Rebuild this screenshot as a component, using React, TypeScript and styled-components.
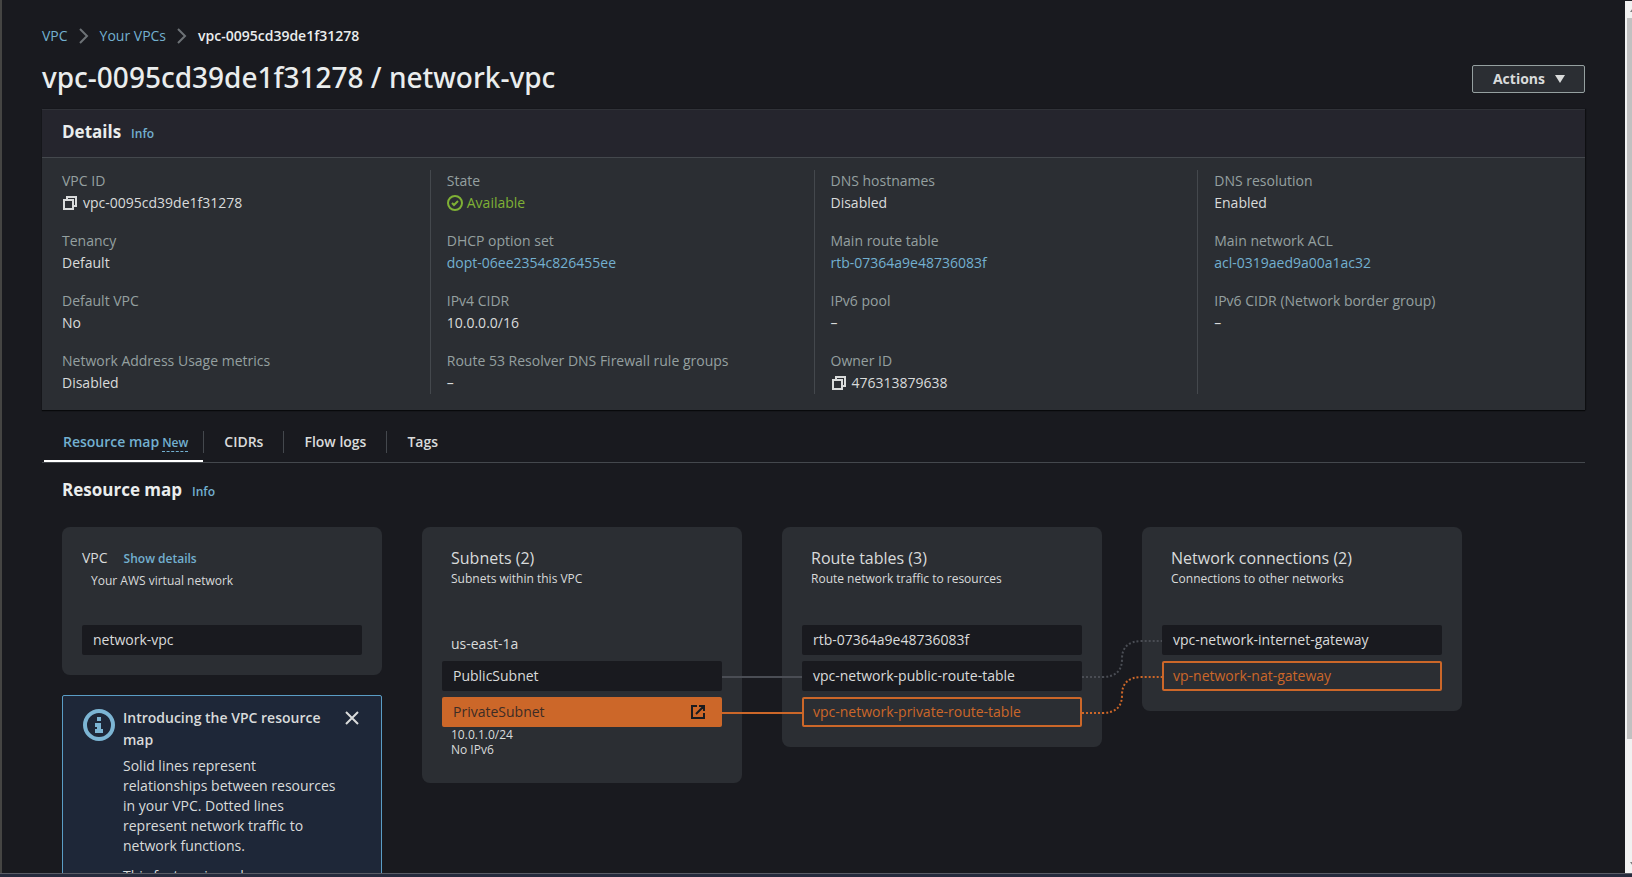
import React from "react";
import styled, { createGlobalStyle, css } from "styled-components";

const c = {
  page: "#191a1f",
  panel: "#2b2e33",
  panelHead: "#25252d",
  line: "#44484d",
  text: "#d9dbdb",
  bright: "#eaeded",
  label: "#95a0a0",
  link: "#73b0d0",
  green: "#7fb135",
  orange: "#cc6729",
};

const GlobalStyle = createGlobalStyle`
  * { box-sizing: border-box; }
  body {
    margin: 0;
    background: ${c.page};
    color: ${c.text};
    font: 14px/22px "Open Sans", "Noto Sans", sans-serif;
  }
  h1, h2, h3, p, ol, ul, dl, dd { margin: 0; padding: 0; font-size: inherit; font-weight: inherit; }
  ol, ul { list-style: none; }
  button { font: inherit; color: inherit; cursor: pointer; }
  svg { display: block; flex: none; }
`;

const Window = styled.div`
  height: 100vh;
  display: grid;
  grid-template: minmax(0, 1fr) auto / minmax(0, 1fr) auto;
`;

const Main = styled.main`
  overflow: hidden;
  border-left: 2px solid #454543;
  padding: 25px 40px 0;
`;

const Track = styled.div`
  width: 7px;
  margin-top: 1px;
  background: #f1f1f1;
  overflow: hidden;
  display: flex;
  flex-direction: column;
`;

const TrackRun = styled.div`
  flex: 1;
`;

const Thumb = styled.div`
  height: 86%;
  margin-left: 2px;
  background: #c1c1c1;
`;

const FooterEdge = styled.footer`
  grid-column: 1 / -1;
  height: 4px;
  border-top: 1px solid #5a5d66;
  background: #262b3d;
`;

const Link = styled.a<{ $small?: boolean }>`
  color: ${c.link};
  text-decoration: none;
  ${(p) => p.$small && css`font-size: 12px; line-height: 16px; font-weight: 600;`}
`;

const Crumbs = styled.ol`
  display: flex;
  align-items: center;
  gap: 11px;
  li { display: flex; align-items: center; gap: 11px; }
`;

const CurrentCrumb = styled.span`
  color: ${c.bright};
  font-weight: 600;
`;

const TitleRow = styled.div`
  display: flex;
  align-items: center;
  justify-content: space-between;
  padding: 14px 0 12px;
`;

const Title = styled.h1`
  padding-bottom: 4px;
  color: ${c.bright};
  font-family: "Noto Sans", "Open Sans", sans-serif;
  font-size: 28px;
  line-height: 32px;
  font-weight: 500;
`;

const ActionsButton = styled.button`
  display: flex;
  align-items: center;
  gap: 9px;
  height: 28px;
  padding: 0 18px 0 20px;
  border: 1px solid #95a0a0;
  border-radius: 2px;
  background: ${c.panel};
  font-weight: 700;
`;

const Panel = styled.section`
  background: ${c.panel};
  border-top: 1px solid #303238;
  box-shadow: 0 1px 1px #08090b, 1px 0 1px #101114;
`;

const PanelHead = styled.header`
  display: flex;
  align-items: baseline;
  gap: 10px;
  padding: 11px 20px 14px;
  border-bottom: 1px solid ${c.line};
  background: ${c.panelHead};
`;

const Heading = styled.h2`
  color: ${c.bright};
  font-size: 17px;
  line-height: 22px;
  font-weight: 700;
`;

const DetailGrid = styled.div`
  display: grid;
  grid-template-columns: repeat(4, minmax(0, 1fr));
  padding: 12px 4px 16px;
`;

const DetailColumn = styled.dl`
  display: flex;
  flex-direction: column;
  gap: 16px;
  padding: 0 16px;
  & + & { border-left: 1px solid ${c.line}; }
`;

const Label = styled.dt`
  color: ${c.label};
`;

const Value = styled.dd`
  display: flex;
  align-items: center;
  gap: 5px;
  font-weight: 500;
`;

const Status = styled.span`
  display: flex;
  align-items: center;
  gap: 4px;
  color: ${c.green};
`;

const IconButton = styled.button`
  padding: 0;
  border: 0;
  background: none;
`;

const TabList = styled.div`
  display: flex;
  padding: 16px 0 0 2px;
  border-bottom: 1px solid ${c.line};
`;

const Tab = styled.button<{ $active?: boolean }>`
  display: flex;
  align-items: baseline;
  gap: 3px;
  height: 36px;
  padding: 5px 20px 9px;
  border: 0;
  border-bottom: 2px solid ${(p) => (p.$active ? "#ffffff" : "transparent")};
  background: none;
  color: ${(p) => (p.$active ? c.link : c.text)};
  font-weight: 600;
  ${(p) => p.$active && css`padding-left: 19px; padding-right: 15px;`}
`;

const TabDivider = styled.span`
  width: 1px;
  height: 22px;
  margin-top: 5px;
  background: ${c.line};
`;

const NewBadge = styled.span`
  border-bottom: 1px dashed ${c.link};
  font-size: 12px;
  line-height: 16px;
`;

const MapSection = styled.section`
  padding: 16px 20px 0;
`;

const MapHead = styled.header`
  display: flex;
  align-items: baseline;
  gap: 10px;
  margin-bottom: 26px;
`;

const Columns = styled.div`
  display: flex;
  align-items: flex-start;
  gap: 40px;
`;

const Side = styled.div`
  display: flex;
  flex-direction: column;
  gap: 20px;
  width: 320px;
`;

const Card = styled.article`
  width: 320px;
  padding: 20px;
  border-radius: 8px;
  background: ${c.panel};
  font-weight: 500;
`;

const CardHead = styled.header<{ $inset?: boolean }>`
  height: 78px;
  padding-left: ${(p) => (p.$inset ? "9px" : "0")};
`;

const CardTitle = styled.h3<{ $large?: boolean }>`
  display: flex;
  align-items: baseline;
  gap: 16px;
  font-size: ${(p) => (p.$large ? "16px" : "14px")};
  line-height: 22px;
`;

const CardNote = styled.p<{ $inset?: boolean }>`
  padding: ${(p) => (p.$inset ? "2px 0 0 9px" : "0")};
  font-size: 12px;
  line-height: 20px;
`;

const Zone = styled.h4`
  margin: 0;
  height: 36px;
  padding: 8px 9px;
  font-weight: inherit;
`;

const Nodes = styled.ul`
  display: flex;
  flex-direction: column;
  gap: 6px;
`;

type Tone = "plain" | "outlined" | "selected";

const tones = {
  plain: css`background: ${c.page}; border-color: ${c.page};`,
  outlined: css`background: ${c.panel}; border-color: ${c.orange}; color: ${c.orange};`,
  selected: css`background: ${c.orange}; border-color: ${c.orange}; color: #3d2c25;`,
};

const Node = styled.li<{ $tone: Tone }>`
  position: relative;
  display: flex;
  align-items: center;
  justify-content: space-between;
  height: 30px;
  padding: 0 15px 0 9px;
  border: 2px solid;
  border-radius: 2px;
  ${(p) => tones[p.$tone]}
`;

const Wire = styled.svg`
  position: absolute;
  left: calc(100% + 2px);
  bottom: 8px;
  fill: none;
  stroke-width: 2;
`;

const SubnetInfo = styled.div`
  padding: 0 9px 6px;
  font-size: 12px;
  line-height: 15px;
`;

const Alert = styled.aside`
  display: flex;
  align-items: flex-start;
  padding: 11px 20px 20px;
  border: 1px solid #5a9dc5;
  border-radius: 2px;
  background: #1e2738;
  svg { margin-top: 2px; }
`;

const AlertText = styled.div`
  flex: 1;
  padding-left: 8px;
  p { line-height: 20px; margin-top: 5px; }
  p + p { margin-top: 10px; }
`;

const AlertTitle = styled.h3`
  font-weight: 600;
`;

const CopyIcon = () => (
  <svg width="16" height="16" viewBox="0 0 16 16" fill="none" stroke="#d9dbdb" strokeWidth="2">
    <path d="M2 5h9v9H2zM5 5V2h9v9h-3" />
  </svg>
);

const Chevron = () => (
  <svg width="10" height="16" viewBox="0 0 10 16" fill="none" stroke="#6d7276" strokeWidth="2">
    <path d="M1 1l7 7-7 7" />
  </svg>
);

const CheckIcon = () => (
  <svg width="16" height="16" viewBox="0 0 16 16" fill="none" stroke={c.green} strokeWidth="2">
    <circle cx="8" cy="8" r="7" />
    <path d="M5 8l2 2 4-4" />
  </svg>
);

const InfoIcon = () => (
  <svg width="32" height="32" viewBox="0 0 32 32" fill="none">
    <circle cx="16" cy="16" r="14" stroke="#7cb5d4" strokeWidth="4" />
    <path d="M14 8h4v4h-4zM12 14h6v6h2v4h-8v-4h2v-2h-2z" fill="#7cb5d4" />
  </svg>
);

const OpenIcon = () => (
  <svg width="14" height="14" viewBox="0 0 14 14" fill="none" stroke="#1a1b1f" strokeWidth="2">
    <path d="M6 1H1v12h12V8M8 1h5v5M13 1L5 9" />
  </svg>
);

const CloseIcon = () => (
  <svg width="18" height="18" viewBox="0 0 18 18" fill="none" stroke={c.text} strokeWidth="2">
    <path d="M3 3l12 12M15 3L3 15" />
  </svg>
);

const ScrollArrow = ({ d }: { d: string }) => (
  <svg width="17" height="17" viewBox="0 0 17 17" fill="#7a7a7a"><path d={d} /></svg>
);

type Detail = { label: string; value: string; kind?: "link" | "copy" | "status" };

const details: Detail[][] = [
  [
    { label: "VPC ID", value: "vpc-0095cd39de1f31278", kind: "copy" },
    { label: "Tenancy", value: "Default" },
    { label: "Default VPC", value: "No" },
    { label: "Network Address Usage metrics", value: "Disabled" },
  ],
  [
    { label: "State", value: "Available", kind: "status" },
    { label: "DHCP option set", value: "dopt-06ee2354c826455ee", kind: "link" },
    { label: "IPv4 CIDR", value: "10.0.0.0/16" },
    { label: "Route 53 Resolver DNS Firewall rule groups", value: "–" },
  ],
  [
    { label: "DNS hostnames", value: "Disabled" },
    { label: "Main route table", value: "rtb-07364a9e48736083f", kind: "link" },
    { label: "IPv6 pool", value: "–" },
    { label: "Owner ID", value: "476313879638", kind: "copy" },
  ],
  [
    { label: "DNS resolution", value: "Enabled" },
    { label: "Main network ACL", value: "acl-0319aed9a00a1ac32", kind: "link" },
    { label: "IPv6 CIDR (Network border group)", value: "–" },
  ],
];

function DetailValue({ value, kind }: Detail) {
  if (kind === "link") return <Link href="#">{value}</Link>;
  if (kind === "status") return <Status><CheckIcon />{value}</Status>;
  if (kind === "copy")
    return (
      <>
        <IconButton aria-label="Copy"><CopyIcon /></IconButton>
        {value}
      </>
    );
  return <>{value}</>;
}

const SolidWire = ({ color }: { color: string }) => (
  <Wire width="80" height="8" stroke={color}><path d="M0 4h80" /></Wire>
);

const DottedWire = ({ color }: { color: string }) => (
  <Wire width="80" height="44" stroke={color} strokeDasharray="2 2">
    <path d="M0 40H20Q40 40 40 22Q40 4 60 4H80" />
  </Wire>
);

export default function App() {
  return (
    <Window>
      <GlobalStyle />
      <Main>
        <nav aria-label="Breadcrumbs">
          <Crumbs>
            <li><Link href="#">VPC</Link><Chevron /></li>
            <li><Link href="#">Your VPCs</Link><Chevron /></li>
            <li><CurrentCrumb>vpc-0095cd39de1f31278</CurrentCrumb></li>
          </Crumbs>
        </nav>
        <TitleRow>
          <Title>vpc-0095cd39de1f31278 / network-vpc</Title>
          <ActionsButton>
            Actions
            <svg width="12" height="10" viewBox="0 0 12 10" fill={c.text}><path d="M1 1h10L6 9z" /></svg>
          </ActionsButton>
        </TitleRow>

        <Panel>
          <PanelHead>
            <Heading>Details</Heading>
            <Link href="#" $small>Info</Link>
          </PanelHead>
          <DetailGrid>
            {details.map((column, i) => (
              <DetailColumn key={i}>
                {column.map((d) => (
                  <div key={d.label}>
                    <Label>{d.label}</Label>
                    <Value><DetailValue {...d} /></Value>
                  </div>
                ))}
              </DetailColumn>
            ))}
          </DetailGrid>
        </Panel>

        <TabList role="tablist">
          <Tab role="tab" aria-selected $active>Resource map <NewBadge>New</NewBadge></Tab>
          <TabDivider />
          <Tab role="tab">CIDRs</Tab>
          <TabDivider />
          <Tab role="tab">Flow logs</Tab>
          <TabDivider />
          <Tab role="tab">Tags</Tab>
        </TabList>

        <MapSection>
          <MapHead>
            <Heading>Resource map</Heading>
            <Link href="#" $small>Info</Link>
          </MapHead>
          <Columns>
            <Side>
              <Card>
                <CardHead>
                  <CardTitle>VPC <Link href="#" $small>Show details</Link></CardTitle>
                  <CardNote $inset>Your AWS virtual network</CardNote>
                </CardHead>
                <Nodes><Node $tone="plain">network-vpc</Node></Nodes>
              </Card>
              <Alert>
                <InfoIcon />
                <AlertText>
                  <AlertTitle>Introducing the VPC resource map</AlertTitle>
                  <p>
                    Solid lines represent relationships between resources in your VPC. Dotted
                    lines represent network traffic to network functions.
                  </p>
                  <p>This feature is under</p>
                </AlertText>
                <IconButton aria-label="Dismiss"><CloseIcon /></IconButton>
              </Alert>
            </Side>

            <Card>
              <CardHead $inset>
                <CardTitle $large>Subnets (2)</CardTitle>
                <CardNote>Subnets within this VPC</CardNote>
              </CardHead>
              <Zone>us-east-1a</Zone>
              <Nodes>
                <Node $tone="plain">PublicSubnet<SolidWire color="#4a4d54" /></Node>
                <Node $tone="selected">
                  PrivateSubnet
                  <OpenIcon />
                  <SolidWire color={c.orange} />
                </Node>
              </Nodes>
              <SubnetInfo>10.0.1.0/24<br />No IPv6</SubnetInfo>
            </Card>

            <Card>
              <CardHead $inset>
                <CardTitle $large>Route tables (3)</CardTitle>
                <CardNote>Route network traffic to resources</CardNote>
              </CardHead>
              <Nodes>
                <Node $tone="plain">rtb-07364a9e48736083f</Node>
                <Node $tone="plain">vpc-network-public-route-table<DottedWire color="#4a4d54" /></Node>
                <Node $tone="outlined">vpc-network-private-route-table<DottedWire color={c.orange} /></Node>
              </Nodes>
            </Card>

            <Card>
              <CardHead $inset>
                <CardTitle $large>Network connections (2)</CardTitle>
                <CardNote>Connections to other networks</CardNote>
              </CardHead>
              <Nodes>
                <Node $tone="plain">vpc-network-internet-gateway</Node>
                <Node $tone="outlined">vp-network-nat-gateway</Node>
              </Nodes>
            </Card>
          </Columns>
        </MapSection>
      </Main>
      <Track aria-hidden>
        <ScrollArrow d="M5 11l3-4 4 4z" />
        <TrackRun><Thumb /></TrackRun>
        <ScrollArrow d="M5 6h7l-4 4z" />
      </Track>
      <FooterEdge />
    </Window>
  );
}
